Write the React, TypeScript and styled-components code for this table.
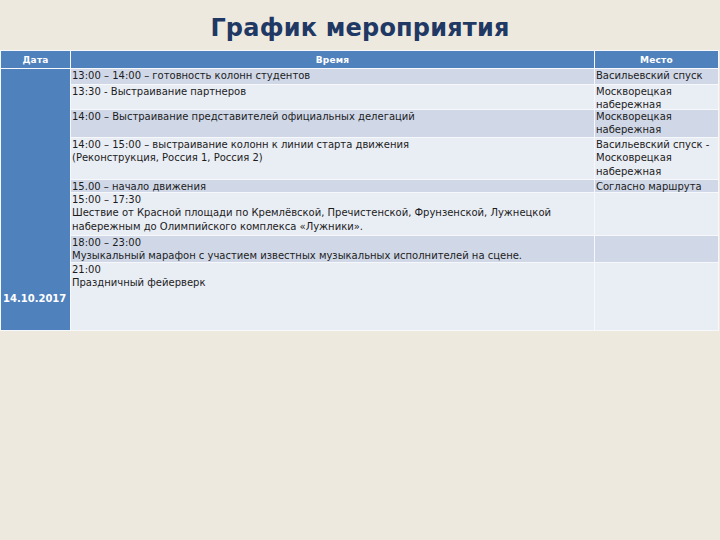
import { Fragment } from 'react';
import styled, { createGlobalStyle } from 'styled-components';

const GlobalStyle = createGlobalStyle`
  html, body {
    margin: 0;
    padding: 0;
    background: #eee9df;
  }
  body {
    width: 720px;
    height: 540px;
    overflow: hidden;
    font-family: 'DejaVu Sans', Verdana, sans-serif;
  }
`;

const Page = styled.div`
  width: 720px;
  height: 540px;
  display: flex;
  flex-direction: column;
`;

const Title = styled.h1`
  margin: 0;
  height: 50px;
  display: flex;
  align-items: center;
  justify-content: center;
  padding-top: 6px;
  box-sizing: border-box;
  font-family: 'DejaVu Sans', Verdana, sans-serif;
  font-size: 24px;
  font-weight: bold;
  color: #1f3864;
  letter-spacing: 0.2px;
`;

const Schedule = styled.div<{ $rows: string }>`
  display: grid;
  grid-template-columns: 69px 523px 123px;
  grid-template-rows: ${({ $rows }) => $rows};
  gap: 1px;
  padding: 1px;
  width: max-content;
  background: #f7f8fb;
  font-size: 10px;
  color: #1c1c1c;
`;

const HeadCell = styled.div`
  background: #4f81bd;
  color: #fff;
  font-weight: bold;
  font-size: 9px;
  display: flex;
  align-items: center;
  justify-content: center;
  letter-spacing: 0.2px;
`;

const DateCell = styled.div<{ $span: number }>`
  grid-column: 1;
  grid-row: 2 / span ${({ $span }) => $span};
  background: #4f81bd;
  color: #fff;
  font-weight: bold;
  font-size: 10px;
  display: flex;
  align-items: flex-end;
  padding: 0 0 26px 2px;
  white-space: nowrap;
`;

const Cell = styled.div<{ $dark: boolean; $col: number }>`
  grid-column: ${({ $col }) => $col};
  background: ${({ $dark }) => ($dark ? '#d0d8e8' : '#e9edf4')};
  padding: 0 0 0 1px;
  line-height: 13.4px;
  white-space: pre-line;
`;

type Row = { time: string; place: string; h: number };

const rows: Row[] = [
  {
    time: '13:00 – 14:00 – готовность колонн студентов',
    place: 'Васильевский спуск',
    h: 15,
  },
  {
    time: '13:30 - Выстраивание партнеров',
    place: 'Москворецкая\nнабережная',
    h: 24,
  },
  {
    time: '14:00 – Выстраивание представителей официальных делегаций',
    place: 'Москворецкая\nнабережная',
    h: 27,
  },
  {
    time: '14:00 – 15:00 – выстраивание колонн к линии старта движения\n(Реконструкция, Россия 1, Россия 2)',
    place: 'Васильевский спуск -\nМосковрецкая\nнабережная',
    h: 41,
  },
  { time: '15.00 – начало движения', place: 'Согласно маршрута', h: 12 },
  {
    time: '15:00 – 17:30\nШествие от Красной площади по Кремлёвской, Пречистенской, Фрунзенской, Лужнецкой\nнабережным до Олимпийского комплекса «Лужники».',
    place: '',
    h: 42,
  },
  {
    time: '18:00 – 23:00\nМузыкальный марафон с участием известных музыкальных исполнителей на сцене.',
    place: '',
    h: 26,
  },
  { time: '21:00\nПраздничный фейерверк', place: '', h: 67 },
];

export default function App() {
  const template = ['17px', ...rows.map((r) => `${r.h}px`)].join(' ');
  return (
    <Page>
      <GlobalStyle />
      <Title>График мероприятия</Title>
      <Schedule $rows={template}>
        <HeadCell>Дата</HeadCell>
        <HeadCell>Время</HeadCell>
        <HeadCell>Место</HeadCell>
        <DateCell $span={rows.length}>14.10.2017</DateCell>
        {rows.map((r, i) => (
          <Fragment key={i}>
            <Cell $dark={i % 2 === 0} $col={2}>
              {r.time}
            </Cell>
            <Cell $dark={i % 2 === 0} $col={3}>
              {r.place}
            </Cell>
          </Fragment>
        ))}
      </Schedule>
    </Page>
  );
}
